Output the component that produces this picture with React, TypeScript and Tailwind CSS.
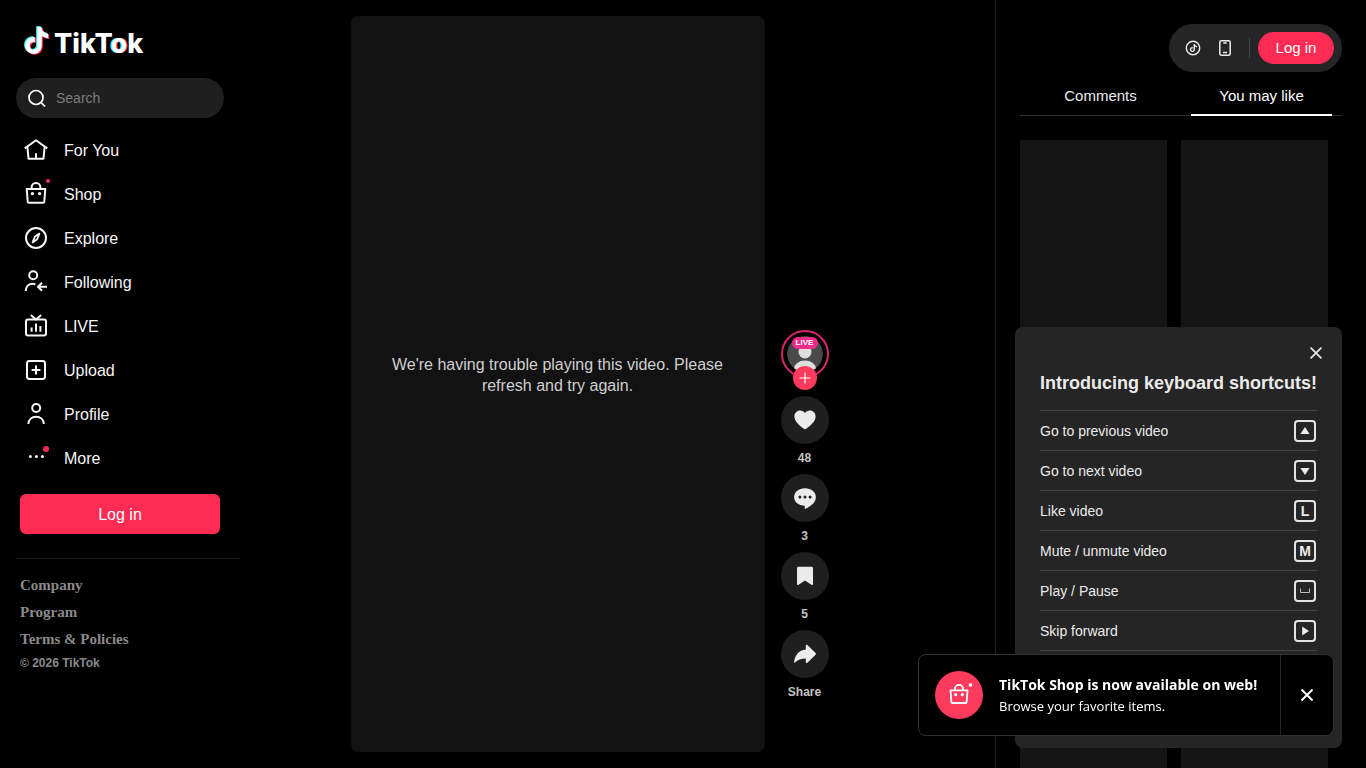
import type { ReactNode } from "react";

const NOTE_PATH =
  "M12.525.02c1.31-.02 2.61-.01 3.91-.02.08 1.53.63 3.09 1.75 4.17 1.12 1.11 2.7 1.62 4.24 1.79v4.03c-1.44-.05-2.89-.35-4.2-.97-.57-.26-1.1-.59-1.62-.93-.01 2.92.01 5.84-.02 8.75-.08 1.4-.54 2.79-1.35 3.94-1.31 1.92-3.58 3.17-5.91 3.21-1.43.08-2.86-.31-4.08-1.03-2.02-1.19-3.44-3.37-3.65-5.71-.02-.5-.03-1-.01-1.49.18-1.9 1.12-3.72 2.58-4.96 1.66-1.44 3.98-2.13 6.15-1.72.02 1.48-.04 2.96-.04 4.44-.99-.32-2.15-.23-3.02.37-.63.41-1.11 1.04-1.36 1.75-.21.51-.15 1.07-.14 1.61.24 1.64 1.82 3.02 3.5 2.87 1.12-.01 2.19-.66 2.77-1.61.19-.33.4-.67.41-1.06.1-1.79.06-3.57.07-5.36.01-4.03-.01-8.05.02-12.07z";

function LineIcon({ children, className = "size-6" }: { children: ReactNode; className?: string }) {
  return (
    <svg
      aria-hidden="true"
      viewBox="0 0 24 24"
      fill="none"
      stroke="currentColor"
      strokeWidth="2"
      strokeLinejoin="round"
      className={`${className} shrink-0 overflow-visible`}
    >
      {children}
    </svg>
  );
}

const Bag = () => (
  <>
    <path d="M2.700 7h18.600l-1 12.700c-.1.600-.5 1-1.100 1H4.800c-.6 0-1-.4-1.100-1L2.700 7Z" />
    <path d="M7.600 7V5.400a4.400 4.400 0 0 1 8.800 0V7" />
    <circle cx="8.400" cy="11.600" r="1.700" fill="currentColor" stroke="none" />
    <circle cx="15.600" cy="11.600" r="1.700" fill="currentColor" stroke="none" />
  </>
);

const navItems: { label: string; icon: ReactNode; dot?: "small" | "large" }[] = [
  {
    label: "For You",
    icon: (
      <>
        <path d="M.8 10.400 12 2.200l11.200 8.200" />
        <path d="M3.400 9l1.100 11.700h15L20.600 9M12 15.200v5.200" />
      </>
    ),
  },
  { label: "Shop", icon: <Bag />, dot: "small" },
  {
    label: "Explore",
    icon: (
      <>
        <circle cx="12" cy="12" r="10" />
        <path strokeWidth="1.800" d="m15.400 7.600-4.600 3.200-2.200 5.600 4.600-3.200 2.200-5.600Z" />
      </>
    ),
  },
  {
    label: "Following",
    icon: (
      <>
        <circle cx="9.200" cy="5.200" r="4" />
        <path d="M1.800 21c.2-4.400 2.800-7.200 6.600-7.200 1.200 0 2.200.2 3 .6M23 16.800h-8.600M18 12.800l-4 4 4 4" />
      </>
    ),
  },
  {
    label: "LIVE",
    icon: (
      <>
        <rect x="2" y="5.600" width="20" height="16" rx="2" />
        <path d="m6.800 1 5.200 4.400L17.200 1M7.600 13.400v4.400M12 9.400v8.400M16.400 12v5.800" />
      </>
    ),
  },
  {
    label: "Upload",
    icon: (
      <>
        <rect x="3" y="3" width="18" height="18" rx="2.400" />
        <path d="M12 7.600v8.800M7.600 12h8.800" />
      </>
    ),
  },
  {
    label: "Profile",
    icon: (
      <>
        <circle cx="12.200" cy="6" r="4" />
        <path d="M4.400 22c.2-4.400 3.400-7.200 7.800-7.200s7.400 2.800 7.600 7.200" />
      </>
    ),
  },
  {
    label: "More",
    icon: (
      <g fill="currentColor" stroke="none">
        <circle cx="6.400" cy="10.500" r="1.500" />
        <circle cx="12.400" cy="10.500" r="1.500" />
        <circle cx="18.400" cy="10.500" r="1.500" />
      </g>
    ),
    dot: "large",
  },
];

function Logo() {
  return (
    <a href="#home" aria-label="TikTok" className="flex items-start gap-1 text-white">
      <svg aria-hidden="true" viewBox="0 0 26 30" className="h-[30px] w-[26px]">
        <g transform="scale(1.100 1.130)">
          <path transform="translate(-1.500 .1)" fill="#25f4ee" d={NOTE_PATH} />
          <path transform="translate(.600 1.500)" fill="#fe2c55" d={NOTE_PATH} />
          <path transform="translate(-.450 .800)" fill="#fff" d={NOTE_PATH} />
        </g>
      </svg>
      <span className="pt-[2px] font-[Inter,sans-serif] text-[27px] leading-8 font-extrabold">
        TikT
        <span className="[text-shadow:-1px_0_0_#25f4ee,1px_0_0_#fe2c55]">o</span>k
      </span>
    </a>
  );
}

function Sidebar() {
  return (
    <div className="flex w-60 shrink-0 flex-col pt-[26px]">
      <header className="h-8 px-6">
        <Logo />
      </header>
      <label className="mx-4 mt-5 flex h-10 items-center gap-2 rounded-full bg-[#1f1f1f] px-2 text-white">
        <LineIcon className="size-6">
          <circle cx="12" cy="11.500" r="7" strokeWidth="1.700" />
          <path strokeWidth="1.700" d="m17 16.500 4 4" />
        </LineIcon>
        <input
          type="search"
          aria-label="Search"
          placeholder="Search"
          className="w-full bg-transparent text-sm outline-none placeholder:text-[#7b7b7b]"
        />
      </label>
      <nav className="mt-[10px] flex flex-col px-6">
        {navItems.map((item) => (
          <a key={item.label} href="#" className="flex h-11 items-center gap-4 text-base text-[#f6f6f6]">
            <span className="relative">
              <LineIcon>{item.icon}</LineIcon>
              {item.dot === "small" && (
                <span className="absolute -top-[3px] -right-[2px] size-1 rounded-full bg-[#fe2c55]" />
              )}
              {item.dot === "large" && (
                <span className="absolute top-0 -right-[1px] size-[6px] rounded-full bg-[#fe2c55]" />
              )}
            </span>
            <span className="pt-[2px]">{item.label}</span>
          </a>
        ))}
      </nav>
      <button type="button" className="mx-5 mt-[14px] h-10 rounded-md bg-[#fe2c55] pt-px text-base text-white">
        Log in
      </button>
      <footer className="mt-6 ml-4 border-t border-[#161616] pt-[13px] pl-1 text-[#8a8a8a]">
        <ul className="font-['Liberation_Serif',serif] text-[15px] leading-[27px] font-bold">
          <li>
            <a href="#company">Company</a>
          </li>
          <li>
            <a href="#program">Program</a>
          </li>
          <li>
            <a href="#terms">Terms &amp; Policies</a>
          </li>
        </ul>
        <p className="text-xs leading-5 font-bold">© 2026 TikTok</p>
      </footer>
    </div>
  );
}

const actions: { name: string; caption: string; icon: ReactNode }[] = [
  {
    name: "Like",
    caption: "48",
    icon: (
      <path d="M7.200 2.600c2 0 3.700 1 4.800 2.500 1.100-1.500 2.800-2.500 4.800-2.500 3.200 0 5.800 2.500 5.800 5.900 0 4.800-5 9.300-9.400 12.300a2.200 2.200 0 0 1-2.400 0C6.400 17.800 1.400 13.300 1.400 8.500c0-3.400 2.600-5.900 5.800-5.900Z" />
    ),
  },
  {
    name: "Comment",
    caption: "3",
    icon: (
      <path
        fillRule="evenodd"
        d="M12 2.200c6.200 0 10.900 3.800 10.900 8.900 0 5.400-5 9.200-10.200 11.700-.5.200-1 0-1-.6v-2.400C5.700 19.700 1.100 16.100 1.100 11.100c0-5.100 4.700-8.900 10.900-8.900ZM6.900 9.600a1.500 1.500 0 1 0 0 3 1.500 1.500 0 0 0 0-3Zm5.100 0a1.500 1.500 0 1 0 0 3 1.500 1.500 0 0 0 0-3Zm5.100 0a1.500 1.500 0 1 0 0 3 1.500 1.500 0 0 0 0-3Z"
      />
    ),
  },
  {
    name: "Save",
    caption: "5",
    icon: (
      <path d="M4 4.200c0-.9.600-1.500 1.500-1.500h13c.9 0 1.500.6 1.500 1.500V20c0 .9-.9 1.300-1.600.8L12 16.600l-6.400 4.200C4.900 21.300 4 20.900 4 20V4.200Z" />
    ),
  },
  {
    name: "Share video",
    caption: "Share",
    icon: (
      <path d="M12.800 3.800c0-.9 1-1.300 1.600-.7l8.200 8c.5.500.5 1.200 0 1.700l-8.200 8c-.6.600-1.600.2-1.600-.7v-3.700c-4.600 0-8 1.100-10.700 4.100-.4.400-1.100.1-1-.5C1.800 13.400 5.600 8.100 12.800 7.400V3.800Z" />
    ),
  },
];

function ActionRail() {
  return (
    <div className="flex w-12 flex-col items-center pb-[44px] text-[#ebebeb]">
      <div className="relative mb-[18px]">
        <a
          href="#creator"
          aria-label="Creator is live"
          className="flex size-12 items-center justify-center rounded-full border-2 border-[#d6246e]"
        >
          <svg aria-hidden="true" viewBox="0 0 36 36" className="size-9 rounded-full">
            <circle cx="18" cy="18" r="18" fill="#4a4a4a" />
            <circle cx="18" cy="16" r="6.500" fill="#dedede" />
            <ellipse cx="18" cy="33" rx="11" ry="8.500" fill="#dedede" />
          </svg>
        </a>
        <span className="absolute top-[7px] left-[11px] w-[26px] rounded-full bg-[#f02c8c] text-center text-[8px] leading-3 font-bold text-white">
          LIVE
        </span>
        <button
          type="button"
          aria-label="Follow"
          className="absolute top-9 left-3 flex size-6 items-center justify-center rounded-full bg-[#fe3b5c]"
        >
          <svg aria-hidden="true" viewBox="0 0 12 12" className="size-3" stroke="#fff" strokeWidth="1.200">
            <path d="M6 .5v11M.5 6h11" />
          </svg>
        </button>
      </div>
      {actions.map((action) => (
        <div key={action.name} className="flex h-[78px] flex-col items-center">
          <button
            type="button"
            aria-label={action.name}
            className="flex size-12 items-center justify-center rounded-full bg-[#1f1f1f]"
          >
            <svg aria-hidden="true" viewBox="0 0 24 24" fill="currentColor" className="size-6">
              {action.icon}
            </svg>
          </button>
          <strong className="mt-[5px] text-xs leading-[18px] text-[#c4c4c4]">{action.caption}</strong>
        </div>
      ))}
    </div>
  );
}

function RightPanel() {
  return (
    <aside className="flex w-[371px] shrink-0 flex-col overflow-hidden border-l border-[#222] px-6 pt-6">
      <div className="flex h-12 shrink-0 items-center self-end rounded-full bg-[#252525] px-2 text-[#ebebeb]">
        <a href="#coins" aria-label="Get coins" className="flex size-8 items-center justify-center">
          <svg aria-hidden="true" viewBox="0 0 16 16" className="size-4">
            <circle cx="8" cy="8" r="6.700" fill="none" stroke="currentColor" strokeWidth="1.400" />
            <path transform="translate(4.300 3.900) scale(.340)" fill="currentColor" d={NOTE_PATH} />
          </svg>
        </a>
        <a href="#app" aria-label="Get app" className="flex size-8 items-center justify-center">
          <svg aria-hidden="true" viewBox="0 0 16 16" fill="none" stroke="currentColor" strokeWidth="1.500" className="size-4">
            <rect x="2.800" y=".8" width="10.400" height="14.400" rx="1.500" />
            <path d="M6.300 3h3.400M6 12.600h4" />
          </svg>
        </a>
        <span className="mx-2 h-5 w-px bg-[#444]" />
        <button type="button" className="h-8 w-[76px] rounded-full bg-[#fe2c55] pt-px text-[15px] text-white">
          Log in
        </button>
      </div>
      <div role="tablist" className="mt-1 flex h-10 shrink-0 border-b border-[#303030] text-[15px]">
        <button type="button" role="tab" aria-selected="false" className="flex-1 pt-[2px] text-[#ebebeb]">
          Comments
        </button>
        <button type="button" role="tab" aria-selected="true" className="relative flex-1 pt-[2px] text-white">
          You may like
          <span className="absolute inset-x-[10px] -bottom-px h-[2px] bg-white" />
        </button>
      </div>
      <div className="mt-6 mr-[14px] grid grid-cols-2 gap-x-[14px] gap-y-[60px]">
        {[0, 1, 2, 3, 4, 5].map((card) => (
          <div key={card} className="aspect-[3/4] bg-[#151515]" />
        ))}
      </div>
    </aside>
  );
}

const shortcuts: { label: string; glyph: ReactNode }[] = [
  { label: "Go to previous video", glyph: <path fill="currentColor" d="m11 7 4.600 7H6.400L11 7Z" /> },
  { label: "Go to next video", glyph: <path fill="currentColor" d="m11 15 4.600-7H6.400l4.600 7Z" /> },
  { label: "Like video", glyph: "L" },
  { label: "Mute / unmute video", glyph: "M" },
  { label: "Play / Pause", glyph: <path fill="none" stroke="#bbb" strokeWidth="1" d="M6.500 8.500v4h9v-4" /> },
  { label: "Skip forward", glyph: <path fill="currentColor" d="M15 11 8.200 6.400v9.200L15 11Z" /> },
];

function ShortcutsPanel() {
  return (
    <section className="fixed right-6 bottom-5 w-[327px] rounded-lg bg-[#252525] px-[25px] pt-4 pb-[97px] text-[#ebebeb]">
      <div className="-mr-[9px] flex justify-end">
        <button type="button" aria-label="Close shortcuts" className="flex size-5 items-center justify-center">
          <svg aria-hidden="true" viewBox="0 0 12 12" className="size-3" stroke="currentColor" strokeWidth="1.700">
            <path d="m.6.6 10.800 10.800M11.400.6.600 11.400" />
          </svg>
        </button>
      </div>
      <h2 className="mt-2 text-lg leading-6 font-bold whitespace-nowrap">Introducing keyboard shortcuts!</h2>
      <ul className="mt-[15px] border-b border-[#454545] text-sm">
        {shortcuts.map((item) => (
          <li key={item.label} className="flex h-10 items-center justify-between border-t border-[#454545] pr-px">
            {item.label}
            {typeof item.glyph === "string" ? (
              <kbd className="flex size-[22px] items-center justify-center rounded-[4px] border-2 border-[#e4e4e4] font-['Liberation_Sans',Arial,sans-serif] text-sm leading-4 font-bold">
                {item.glyph}
              </kbd>
            ) : (
              <svg aria-hidden="true" viewBox="0 0 22 22" className="size-[22px]">
                <rect x="1" y="1" width="20" height="20" rx="3" fill="none" stroke="#e4e4e4" strokeWidth="2" />
                {item.glyph}
              </svg>
            )}
          </li>
        ))}
      </ul>
    </section>
  );
}

function ShopToast() {
  return (
    <div
      role="status"
      className="fixed right-8 bottom-8 flex h-[82px] w-[416px] rounded-lg border border-[#303030] bg-black font-['Open_Sans','Noto_Sans',sans-serif] text-white"
    >
      <div className="flex flex-1 items-center gap-4 pl-4">
        <span className="flex size-12 shrink-0 items-center justify-center rounded-full bg-[#fe3b5c]">
          <LineIcon className="size-[22px]">
            <Bag />
            <circle cx="24.500" cy="1.200" r="2" fill="currentColor" stroke="none" />
          </LineIcon>
        </span>
        <div className="whitespace-nowrap">
          <p className="text-sm leading-[22px] font-bold">TikTok Shop is now available on web!</p>
          <p className="text-[13px] leading-5">Browse your favorite items.</p>
        </div>
      </div>
      <button
        type="button"
        aria-label="Dismiss"
        className="flex w-[53px] items-center justify-center border-l border-[#252525]"
      >
        <svg aria-hidden="true" viewBox="0 0 12 12" className="size-3" stroke="currentColor" strokeWidth="2">
          <path d="m.500.500 11 11M11.500.500l-11 11" />
        </svg>
      </button>
    </div>
  );
}

export default function App() {
  return (
    <div className="flex h-screen overflow-hidden bg-black font-['Liberation_Sans',Arial,sans-serif]">
      <Sidebar />
      <main className="flex min-w-0 flex-1 items-end justify-center gap-4 py-4 pr-14">
        <section className="flex aspect-[9/16] h-full items-center justify-center rounded-lg bg-[#121212] px-8">
          <p className="pb-[18px] text-center text-base leading-[21px] text-[#cfcfcf]">
            We're having trouble playing this video. Please refresh and try again.
          </p>
        </section>
        <ActionRail />
      </main>
      <RightPanel />
      <ShortcutsPanel />
      <ShopToast />
    </div>
  );
}
